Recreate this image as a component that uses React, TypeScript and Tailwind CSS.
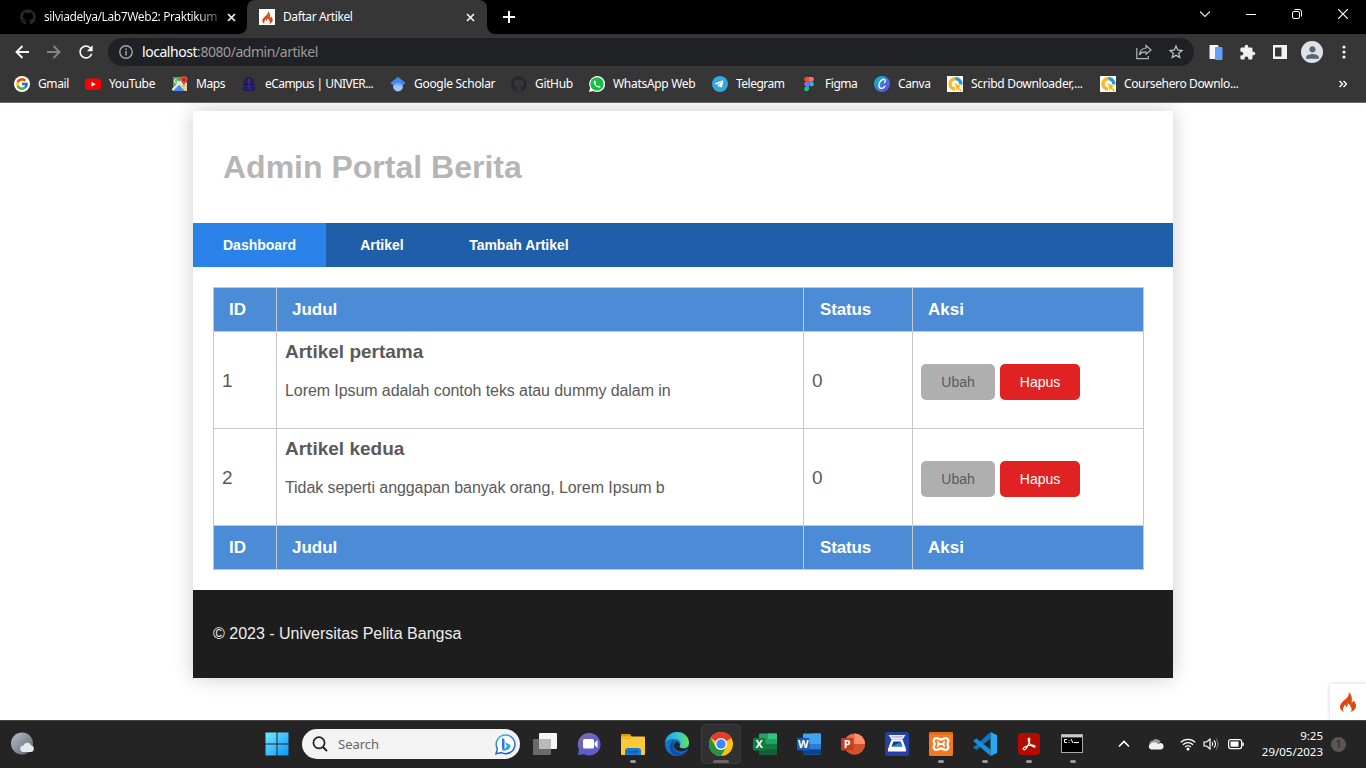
import type { ReactNode } from "react";
import { FcGoogle } from "react-icons/fc";
import { FaGithub, FaTelegramPlane } from "react-icons/fa";
import { MdRefresh, MdOutlineStarBorder, MdExtension, MdPerson } from "react-icons/md";

const S = ({ s = 16, vb = "0 0 16 16", children }: { s?: number; vb?: string; children: ReactNode }) => (
  <svg width={s} height={s} viewBox={vb} fill="none" className="block shrink-0">
    {children}
  </svg>
);

const CloseX = () => (
  <S s={9} vb="0 0 9 9">
    <path d="M1 1l7 7M8 1L1 8" stroke="#f2f2f2" strokeWidth="1.7" />
  </S>
);

const Flame = ({ s }: { s: number }) => (
  <S s={s} vb="0 0 20 20">
    <path
      d="M10.700 0c.7 3.200-.6 4.900-3.300 7.300C4.500 9.900 2 11.900 2 15c0 2.400 1.600 4.200 4 5-1.300-1.200-1.500-2.600-.8-3.900.6-1.200 1.500-2 1.300-3.400 1.200.5 1.700 1.500 1.500 2.600 1.500-1 2.200-2.300 1.700-4 2 .9 2.500 2.500 3.200 4 1.400 2.200.9 3.600-.9 4.700 3.600-.7 6-3 6-6.200 0-2.600-1.500-4-2.500-5.200-.4 1.200-.9 1.800-1.900 2.200C14.300 6.900 14 2.400 10.700 0z"
      fill="#dd4814"
    />
  </S>
);

const GithubDim = () => <FaGithub size={16} color="#24292f" className="shrink-0" />;

const MapsIcon = () => (
  <S>
    <path d="M1 1h11v14H1z" fill="#4caf50" />
    <path d="M1 14L12 3l3 4v8H1z" fill="#dfe3e8" />
    <path d="M1 15l6-6 6 6z" fill="#4a8cf5" />
    <path d="M0 14L10 4" stroke="#fff" strokeWidth="1.5" />
    <path d="M7 9l6 6h2V9z" fill="#f5c32c" opacity=".55" />
    <path d="M4.500 3.200a2 2 0 102 2h-2" stroke="#fff" strokeWidth="1" />
    <path d="M12 0a3.600 3.600 0 00-3.600 3.600C8.400 6 11.400 7 12 10.500c.6-3.500 3.600-4.500 3.600-6.900A3.600 3.600 0 0012 0z" fill="#e94335" />
    <circle cx="12" cy="3.700" r="1.300" fill="#8c1e16" />
  </S>
);

const CampusIcon = () => (
  <S>
    <path d="M3 6a5 5 0 0110 0l1 5-1 4H3l-1-4z" fill="#1c1a5e" />
    <path d="M2 10.500h12M4 13h8M5 6h6" stroke="#2f2a78" />
    <path d="M8 2l1.500 2L8 6.500 6.500 4z" fill="#8b2233" />
    <path d="M8 6v7" stroke="#2f2b78" strokeWidth="2" />
  </S>
);

const ScholarIcon = () => (
  <S>
    <circle cx="8" cy="10.600" r="4.900" fill="#a0c3ff" />
    <path d="M8 .8L15.700 7 12.500 9.600a5 5 0 00-9 0L.3 7z" fill="#4285f4" />
    <path d="M3.500 9.600a5 5 0 019 0z" fill="#76a7fa" />
  </S>
);

const FigmaIcon = () => (
  <S>
    <path d="M5.500 1H8v4.700H5.500a2.350 2.350 0 010-4.700z" fill="#f24e1e" />
    <path d="M8 1h2.600a2.350 2.350 0 010 4.700H8z" fill="#ff7262" />
    <path d="M5.500 5.700H8v4.700H5.500a2.350 2.350 0 010-4.700z" fill="#a259ff" />
    <circle cx="10.500" cy="8.050" r="2.350" fill="#1abcfe" />
    <path d="M5.500 10.400H8v2.300a2.400 2.400 0 11-2.500-2.300z" fill="#0acf83" />
  </S>
);

const CanvaIcon = () => (
  <S>
    <defs>
      <linearGradient id="canva" x1="0" y1="0" x2="1" y2="1">
        <stop offset="0" stopColor="#00c4cc" />
        <stop offset=".55" stopColor="#3f7be0" />
        <stop offset="1" stopColor="#7d2ae8" />
      </linearGradient>
    </defs>
    <circle cx="8" cy="8" r="8" fill="url(#canva)" />
    <path d="M10.600 6.200c1.200-1.200.8-3-.8-3-2.600 0-5 3.500-4.900 6.300.1 3.300 3.700 4 6 .9" stroke="#fff" strokeWidth="1.400" strokeLinecap="round" />
  </S>
);

const DownloaderIcon = () => (
  <S>
    <path d="M0 0h16v16H0z" fill="#fff" />
    <path d="M9 2.800A5 5 0 003 8a5 5 0 005 5" stroke="#fbb71b" strokeWidth="3.400" />
    <path d="M8.500 2.500A5.500 5.500 0 0113.800 8.500" stroke="#1e9be0" strokeWidth="3.400" />
    <path d="M7.500 6.500l7.500 4-3 1 3.500 3-1.500 1.500-3.200-3-1.300 2.500z" fill="#fbb71b" stroke="#fff" strokeWidth=".5" />
  </S>
);

const bookmarks: { label: string; box: string; text: string; icon: ReactNode }[] = [
  { label: "Gmail", box: "w-[71px]", text: "tracking-[-0.4px]", icon: <span className="flex size-4 items-center justify-center rounded-full bg-white"><FcGoogle size={14} /></span> },
  { label: "YouTube", box: "w-[87px]", text: "tracking-[-0.35px]", icon: <S><rect y="2.500" width="16" height="11.500" rx="3" fill="#f00" /><path d="M6.500 5.800v5l4.200-2.500z" fill="#fff" /></S> },
  { label: "Maps", box: "w-[69px]", text: "tracking-[-0.45px]", icon: <MapsIcon /> },
  { label: "eCampus | UNIVER...", box: "w-[149px]", text: "tracking-[-0.55px]", icon: <CampusIcon /> },
  { label: "Google Scholar", box: "w-[121px]", text: "tracking-[-0.3px]", icon: <ScholarIcon /> },
  { label: "GitHub", box: "w-[78px]", text: "tracking-[-0.35px]", icon: <GithubDim /> },
  { label: "WhatsApp Web", box: "w-[123px]", text: "tracking-[-0.3px]", icon: <S><path d="M0 16l1.200-4.200A8 8 0 118 16a8 8 0 01-3.800-1z" fill="#fff" /><circle cx="8" cy="8" r="6.700" fill="#12c143" /><path d="M5.500 4.300c-1.700 1.200-.4 4 1.200 5.600 1.700 1.600 4.200 2.500 5 .8l-1.800-1.300-1 .8c-1-.3-1.900-1.300-2.300-2.200l.6-1-.8-1.900z" fill="#fff" /></S> },
  { label: "Telegram", box: "w-[89px]", text: "tracking-[-0.5px]", icon: <span className="flex size-4 items-center justify-center rounded-full bg-[#34a6e0] pr-0.5"><FaTelegramPlane size={10} color="#fff" /></span> },
  { label: "Figma", box: "w-[73px]", text: "tracking-[-0.45px]", icon: <FigmaIcon /> },
  { label: "Canva", box: "w-[73px]", text: "tracking-[-0.4px]", icon: <CanvaIcon /> },
  { label: "Scribd Downloader,...", box: "w-[153px]", text: "tracking-[-0.3px]", icon: <DownloaderIcon /> },
  { label: "Coursehero Downlo...", box: "w-[153px]", text: "tracking-[-0.36px]", icon: <DownloaderIcon /> },
];

function TabStrip() {
  return (
    <div className="flex h-[34px] bg-black text-xs text-white">
      <div className="flex w-[247px] items-center pl-5">
        <GithubDim />
        <span className="ml-2 w-[174px] whitespace-nowrap bg-linear-to-r from-white from-88% to-neutral-600 bg-clip-text tracking-[-0.4px] text-transparent">
          silviadelya/Lab7Web2: Praktikum
        </span>
        <span className="ml-[9px]"><CloseX /></span>
      </div>
      <div className="relative flex w-60 items-center rounded-t-lg bg-[#363636] pl-3">
        <svg width="8" height="8" className="absolute -left-2 bottom-0"><path d="M8 0v8H0a8 8 0 008-8z" fill="#363636" /></svg>
        <svg width="8" height="8" className="absolute -right-2 bottom-0"><path d="M0 0v8h8a8 8 0 01-8-8z" fill="#363636" /></svg>
        <span className="flex size-4 items-center justify-center bg-white"><Flame s={13} /></span>
        <span className="ml-2 flex-1 tracking-[-0.4px]">Daftar Artikel</span>
        <span className="mr-3"><CloseX /></span>
      </div>
      <div className="flex flex-1 items-center pl-4">
        <S s={12} vb="0 0 12 12"><path d="M6 0v12M0 6h12" stroke="#fff" strokeWidth="2" /></S>
      </div>
      <div className="flex w-[184px] -translate-y-[3px] items-center">
        <span className="flex w-[46px] justify-center"><S s={10} vb="0 0 10 10"><path d="M0 2.500l5 5 5-5" stroke="#eee" strokeWidth="1.100" /></S></span>
        <span className="flex w-[46px] justify-center"><S s={10} vb="0 0 10 10"><path d="M0 5.500h10" stroke="#fff" /></S></span>
        <span className="flex w-[46px] justify-center"><S s={10} vb="0 0 10 10"><rect x=".5" y="2.500" width="7" height="7" rx="1.500" stroke="#fff" /><path d="M2.500.5H7a2.500 2.500 0 012.500 2.500v4.500" stroke="#fff" /></S></span>
        <span className="flex w-[46px] justify-center"><S s={10} vb="0 0 10 10"><path d="M0 0l10 10M10 0L0 10" stroke="#fff" strokeWidth="1.200" /></S></span>
      </div>
    </div>
  );
}

function Toolbar() {
  return (
    <div className="flex h-9 items-center bg-[#363636]">
      <div className="flex w-[108px] items-center pl-[15px]">
        <S s={14} vb="0 0 14 14"><path d="M14 7H1.500M7.500 1L1.500 7l6 6" stroke="#f5f5f5" strokeWidth="1.900" /></S>
        <span className="ml-[18px]"><S s={14} vb="0 0 14 14"><path d="M0 7h12.500M6.500 1l6 6-6 6" stroke="#858585" strokeWidth="1.900" /></S></span>
        <MdRefresh size={20} color="#f5f5f5" className="ml-[15px]" />
      </div>
      <div className="flex h-7 w-[1086px] items-center rounded-full bg-[#202124] pl-[11px] pr-[9px]">
        <S s={14} vb="0 0 14 14"><circle cx="7" cy="7" r="6.200" stroke="#a5a7aa" strokeWidth="1.400" /><path d="M7 6v4.500M7 3.500V5" stroke="#a5a7aa" strokeWidth="1.500" /></S>
        <span className="ml-[9px] flex-1 text-sm tracking-[-0.45px] text-[#9a9b9d]"><span className="text-white">localhost</span>:8080/admin/artikel</span>
        <S s={16}><path d="M.8 4v10.600h11.500V12" stroke="#b5b6b8" strokeWidth="1.200" /><path d="M10 1.500L15 6l-5 4.300V8C7 7.800 5 8.500 3.300 10.800 4 6.500 6.500 4.300 10 4z" stroke="#b5b6b8" strokeWidth="1.200" /></S>
        <MdOutlineStarBorder size={18} color="#c5c6c8" className="ml-[15px]" />
      </div>
      <div className="flex flex-1 items-center">
        <span className="ml-[15px]"><S s={15} vb="0 0 15 15"><rect x="0.500" y="0" width="9" height="14" rx="1" fill="#f4f6f8" /><rect x="6" y="2" width="7.500" height="13" rx="1" fill="#62a1fb" /></S></span>
        <MdExtension size={17} color="#f1f1f1" className="ml-[15px]" />
        <span className="ml-[17px]"><S s={14} vb="0 0 14 14"><path d="M0 0h14v14H0zM2 2.500v9h6.500v-9z" fill="#f4f4f4" fillRule="evenodd" /></S></span>
        <span className="ml-[14px] flex size-[22px] items-center justify-center rounded-full bg-[#dee1e6]"><MdPerson size={19} color="#586475" /></span>
        <svg width="4" height="14" className="ml-[19px] shrink-0" fill="#f5f5f5"><circle cx="2" cy="2" r="1.600" /><circle cx="2" cy="7" r="1.600" /><circle cx="2" cy="12" r="1.600" /></svg>
      </div>
    </div>
  );
}

function Bookmarks() {
  return (
    <div className="flex h-[33px] items-center border-b border-[#6a6667] bg-[#363636] pb-[4px] pl-3.5 text-xs text-white">
      {bookmarks.map((b) => (
        <div key={b.label} className={`flex shrink-0 items-center whitespace-nowrap ${b.box}`}>
          {b.icon}
          <span className={`ml-2 ${b.text}`}>{b.label}</span>
        </div>
      ))}
      <span className="ml-[86px]"><S s={8} vb="0 0 8 8"><path d="M.5 1l3 3-3 3M4.500 1l3 3-3 3" stroke="#fff" strokeWidth="1.400" /></S></span>
    </div>
  );
}

const articles = [
  { id: 1, title: "Artikel pertama", body: "Lorem Ipsum adalah contoh teks atau dummy dalam in" },
  { id: 2, title: "Artikel kedua", body: "Tidak seperti anggapan banyak orang, Lorem Ipsum b" },
];
const grid = "grid grid-cols-[63px_527px_109px_232px] border-[#c8c8c8] *:border-l *:border-[#c8c8c8] *:last:border-r";

function HeadRow() {
  return (
    <div className={`${grid} h-11 border-t bg-[#4c8bd5] text-[17px] font-bold text-white *:flex *:items-center *:pl-[15px]`}>
      <div>ID</div>
      <div>Judul</div>
      <div><span className="pl-px tracking-[-0.15px]">Status</span></div>
      <div>Aksi</div>
    </div>
  );
}

function Page() {
  return (
    <div className="relative h-[617px] overflow-hidden bg-white pt-2 font-['Liberation_Sans',Arial,sans-serif] text-[#5a5a5a]">
      <div className="mx-auto w-[980px] bg-white shadow-[0_0_20px_rgba(0,0,0,0.2)]">
        <header className="flex h-28 items-center pl-[30px]">
          <h1 className="text-[32px] font-bold text-[#b5b5b5]">Admin Portal Berita</h1>
        </header>
        <nav className="flex h-11 items-stretch gap-1 bg-[#1f5faa] text-sm font-bold text-white *:flex *:items-center *:px-[30px]">
          <a className="bg-[#2b83ea]">Dashboard</a>
          <a className="w-[105px]">Artikel</a>
          <a>Tambah Artikel</a>
        </nav>
        <main className="px-5 pt-5 pb-5">
          <div className="w-[931px] border-b border-[#c8c8c8]">
            <HeadRow />
            {articles.map((a) => (
              <div key={a.id} className={`${grid} h-[97px] border-t`}>
                <div className="flex items-center pt-0.5 pl-2 text-[19px]">{a.id}</div>
                <div className="pt-[9px] pl-2">
                  <h2 className="text-[19px] leading-[22px] font-bold">{a.title}</h2>
                  <p className="pt-[19px] text-base leading-[18px] tracking-[-0.08px]">{a.body}</p>
                </div>
                <div className="flex items-center pt-0.5 pl-2 text-[19px]">0</div>
                <div className="flex items-center gap-[5px] pt-1 pl-2 text-sm">
                  <button className="h-9 w-[74px] rounded-[5px] bg-[#afafaf] text-[#5a5a5a]">Ubah</button>
                  <button className="h-9 w-20 rounded-[5px] bg-[#e02222] text-white">Hapus</button>
                </div>
              </div>
            ))}
            <HeadRow />
          </div>
        </main>
        <footer className="flex h-22 items-center bg-[#1d1d1d] pl-5 text-base text-[#eeeeee]">
          © 2023 - Universitas Pelita Bangsa
        </footer>
      </div>
      <div className="absolute right-0 bottom-0 flex size-9 items-center justify-center bg-white shadow-[0_0_4px_rgba(0,0,0,0.2)]">
        <Flame s={20} />
      </div>
    </div>
  );
}

const Office = ({ c, letter, round }: { c: string[]; letter: string; round?: boolean }) => (
  <S s={24} vb="0 0 24 24">
    {round ? (
      <>
        <circle cx="13.500" cy="12" r="10.500" fill={c[0]} />
        <path d="M13.500 1.500A10.500 10.500 0 0124 12H13.500z" fill={c[1]} />
        <path d="M3 12h21a10.500 10.500 0 01-21 0z" fill={c[2]} />
      </>
    ) : (
      <>
        <rect x="6" y="1.500" width="18" height="21" rx="1" fill={c[0]} />
        <path d="M15 1.500h8a1 1 0 011 1V7h-9z" fill={c[1]} />
        <path d="M6 12h18v5.500H6z" fill={c[2]} />
        <path d="M6 17.300h18v4.200a1 1 0 01-1 1H6z" fill={c[3]} />
      </>
    )}
    <rect y="6" width="12.500" height="12.500" rx="1" fill={c[4]} />
    <text x="6.200" y="16.200" textAnchor="middle" fontFamily="Open Sans, sans-serif" fontWeight="700" fontSize="11" fill="#fff">{letter}</text>
  </S>
);

const apps: { name: string; run?: boolean; active?: boolean; icon: ReactNode }[] = [
  { name: "tasks", icon: <S s={24} vb="0 0 24 24"><rect x="6" y="1" width="18" height="16" rx="1" fill="#f4f4f4" /><rect y="7" width="18" height="16" rx="1" fill="#6a6a6a" /><path d="M6 7h12v10H6z" fill="#b9b9b9" /></S> },
  { name: "chat", icon: <S s={24} vb="0 0 24 24"><defs><linearGradient id="cht" x1="0" y1="0" x2=".6" y2="1"><stop stopColor="#8c6aa6" /><stop offset=".6" stopColor="#5f60cc" /><stop offset="1" stopColor="#5b5bd0" /></linearGradient></defs><path d="M12 1a11.300 11.300 0 11-5 21.300L1 23l1-5.500A11.300 11.300 0 0112 1z" fill="url(#cht)" /><rect x="6" y="7" width="11" height="9.500" rx="1.500" fill="#fff" /><path d="M17.500 11l3-3v8l-3-3z" fill="#fff" /></S> },
  { name: "files", run: true, icon: <S s={24} vb="0 0 24 24"><path d="M0 3a1 1 0 011-1h8l2 3v3H0z" fill="#dd9b0a" /><rect y="4.500" width="24" height="18.500" rx="1" fill="#fcc938" /><path d="M0 6.500h9l2-2" stroke="#e9ad1b" /><path d="M4 23v-4a3 3 0 013-3h10a3 3 0 013 3v4z" fill="#1379d2" /><path d="M7 19h10v1.500H7z" fill="#0b5698" /></S> },
  { name: "edge", icon: <S s={24} vb="0 0 24 24"><defs><linearGradient id="e1" x1="0" y1=".4" x2="1" y2=".4"><stop stopColor="#259fdc" /><stop offset=".5" stopColor="#35c2dc" /><stop offset="1" stopColor="#6be04a" /></linearGradient></defs><circle cx="12" cy="12" r="12" fill="#1174cd" /><path d="M0 11C.5 4 6 0 12 0c7 0 12 5 12 10.500 0 4-3 5.700-6 5.700-3.500 0-4-1.700-3-2.700 2-3-1-6.500-5.500-6.500C5 7 1 8.500 0 11z" fill="url(#e1)" /><path d="M8.500 12c-1.500 5 3 10.500 10 8.500l3.300-2.200C19 24 9 26 5.500 19 3.500 14 6 9 10 7.500 8.500 9 8.800 10.800 8.500 12z" fill="#0d4f9c" /><path d="M12 9.500c-3 .5-4.500 5-1 8.300 3 2.400 7 2.400 10.500-.3l2.500.5L24 15c-3 2-8 2-9.300 0-.7-1 .3-1.500.2-3z" fill="#242424" /></S> },
  { name: "chrome", run: true, active: true, icon: <S s={24} vb="0 0 24 24"><circle cx="12" cy="12" r="12" fill="#fbc116" /><path d="M12 12L1.600 6A12 12 0 0122.400 6z" fill="#e33b2e" /><path d="M12 6h10.400A12 12 0 0012 0z" fill="#e33b2e" /><path d="M1.600 6l5.200 9L12 18l-1 6A12 12 0 011.600 6z" fill="#229342" /><path d="M12 17l5.200-2L12 24h-1.500z" fill="#229342" /><circle cx="12" cy="12" r="6" fill="#fff" /><circle cx="12" cy="12" r="4.700" fill="#4285f4" /></S> },
  { name: "excel", icon: <Office letter="X" c={["#21a366", "#33c481", "#107c41", "#185c37", "#107c41"]} /> },
  { name: "word", icon: <Office letter="W" c={["#41a5ee", "#41a5ee", "#2b7cd3", "#103f91", "#185abd"]} /> },
  { name: "ppt", icon: <Office round letter="P" c={["#ed6c47", "#ff8f6b", "#d35230", "", "#c43e1c"]} /> },
  { name: "scan", icon: <S s={24} vb="0 0 24 24"><rect width="24" height="24" rx="2.500" fill="#2540a8" /><path d="M3.500 3h17l-3 4.500h-11z" fill="#f2f4fa" /><path d="M6 4h12l-1 2H7z" fill="#b9c4e6" /><path d="M6.500 7.500h11L21 17v2.500H3V17z" fill="#fff" /><path d="M8.500 9.500h7l2 5H6.500z" fill="#1c3794" /><path d="M6.500 14.500l8.500-4 2 4z" fill="#1f91cf" /></S> },
  { name: "xampp", run: true, icon: <S s={24} vb="0 0 24 24"><rect width="24" height="24" rx="1.500" fill="#f27a23" /><path d="M.5.500h23v1.500H.5z" fill="#c96a2a" /><path d="M7.500 6.200C5 6.200 4 8.500 5 10.200c.8 1.200.8 2.400 0 3.600-1 1.700 0 4 2.500 4 2.200 0 2.800-1.300 4.500-1.300s2.300 1.300 4.500 1.300c2.500 0 3.500-2.300 2.500-4-.8-1.200-.8-2.400 0-3.600 1-1.700 0-4-2.500-4-2.200 0-2.800 1.300-4.500 1.300S9.700 6.200 7.500 6.200z" stroke="#fff" strokeWidth="2.300" /><path d="M8.700 9.800q1.800 2.200 0 4.400M15.300 9.800q-1.800 2.200 0 4.400M9.500 12h5" stroke="#fff" strokeWidth="1.800" strokeLinecap="round" /></S> },
  { name: "code", run: true, icon: <S s={24} vb="0 0 24 24"><path d="M17.500 0L24 3v18l-6.500 3z" fill="#2aa7f2" /><path d="M17.500 0v6.500L3.500 18 0 15.700z" fill="#0a78c6" /><path d="M17.500 24v-6.500L3.500 6.500 0 8.800z" fill="#1a8ddd" /></S> },
  { name: "pdf", run: true, icon: <span className="mb-px flex size-[22px] items-center justify-center rounded bg-[#b30b00]"><S s={16}><path d="M2.500 13.500c-1.500-1.200 2-3.300 5.500-4 3.500-.8 6.500-.3 6 1.200-.6 1.500-5-1.700-6.200-4.700C7 3.800 7 2 8 2s1 2.200 0 5-3.500 8-5.500 6.500z" stroke="#fff" strokeWidth="1.200" /></S></span> },
  { name: "cmd", run: true, icon: <svg width="22" height="19" fill="none" className="mr-0.5 mb-px"><path d="M0 0h22v19H0z" fill="#a9a9a9" /><path d="M1 1h20v2H1z" fill="#c8ccd8" /><path d="M1 3.500h20V18H1z" fill="#000" /><path d="M6 5.500H3.500v3H6M8 6v.8M8 8v.8M10 5l2 4M13 8.500h5" stroke="#fff" strokeWidth="1" /></svg> },
];

function Taskbar() {
  return (
    <div className="flex h-12 items-center border-t border-[#454545] bg-[#242424] pb-px text-white">
      <div className="w-[254px] pl-[11px]">
        <S s={24} vb="0 0 24 24"><defs><linearGradient id="moon" x1="0" y1="0" x2="1" y2="1"><stop stopColor="#b8c1cb" /><stop offset="1" stopColor="#59626d" /></linearGradient></defs><circle cx="11" cy="11.500" r="11" fill="url(#moon)" /><path d="M12.500 20a3.200 3.200 0 010-6.400 4 4 0 017.500-.3 3.400 3.400 0 010 6.700z" fill="#e6e9ee" /></S>
      </div>
      <div className="flex w-11 justify-center pl-px">
        <S s={24} vb="0 0 24 24"><defs><linearGradient id="win" x1="0" y1="0" x2="24" y2="24" gradientUnits="userSpaceOnUse"><stop stopColor="#74ecff" /><stop offset="1" stopColor="#0a93fb" /></linearGradient></defs><path d="M.5.500h11v11H.5zM12.500.5h11v11h-11zM.5 12.500h11v11H.5zM12.500 12.500h11v11h-11z" fill="url(#win)" /></S>
      </div>
      <div className="ml-1 flex h-[30px] w-[218px] items-center rounded-full bg-[#f3f3f3] pr-1 pl-[10px]">
        <S s={16}><circle cx="7" cy="6.800" r="5.600" stroke="#1e1e1e" strokeWidth="1.700" /><path d="M11 11l4 4.200" stroke="#1e1e1e" strokeWidth="1.900" /></S>
        <span className="ml-2.5 flex-1 pt-px text-[13px] text-[#656565]">Search</span>
        <S s={21} vb="0 0 21 21"><defs><linearGradient id="bing" x1="0" y1="0" x2=".4" y2="1"><stop stopColor="#31b9f2" /><stop offset="1" stopColor="#2055ca" /></linearGradient></defs><path d="M11 1a9.300 9.300 0 11-4.500 17.600L1 19.800l1.400-5A9.300 9.300 0 0111 1z" stroke="url(#bing)" strokeWidth="1.500" fill="#fff" /><path d="M7 4l2.500 1.200v9L7 16z" fill="#2578de" /><path d="M10 8l5 2.700c1.500 2-.5 4-2.500 5L8.500 17 7 16l4-2.500 1-1z" fill="#2ca0e8" /></S>
      </div>
      <div className="ml-[3px] flex">
        {apps.map((a) => (
          <div key={a.name} className="flex w-11 justify-center">
            <div className={`relative flex size-10 items-center justify-center rounded ${a.active ? "border border-[#3a3a3a] bg-[#303030]" : ""}`}>
              {a.icon}
              {a.run && <i className={`absolute h-[3px] rounded-full ${a.active ? "bottom-0 w-4 bg-[#6a6663]" : "bottom-px w-1.5 bg-[#999]"}`} />}
            </div>
          </div>
        ))}
      </div>
      <div className="flex flex-1 items-center">
        <span className="ml-[23px]"><S s={12} vb="0 0 12 12"><path d="M1 8.500l5-5 5 5" stroke="#fff" strokeWidth="1.600" /></S></span>
        <span className="ml-[18px]"><S s={16}><path d="M2 10a3.500 3.500 0 013-5.500 4.800 4.800 0 017.500 1L9 9z" fill="#999" /><path d="M3 13.500a3 3 0 01-.3-5.700A5 5 0 0110 8l2-1a3.300 3.300 0 011 6.500z" fill="#f0f0f0" /></S></span>
        <span className="ml-[16px]"><S><path d="M.8 6.400a10.200 10.200 0 0114.400 0M3 8.700a7 7 0 0110 0M5.200 11a4 4 0 015.600 0" stroke="#fff" strokeWidth="1.300" /><circle cx="8" cy="13" r="1.500" fill="#fff" /></S></span>
        <span className="ml-[7px]"><S><path d="M1 6v4h2.500L7 13V3L3.500 6z" stroke="#fff" strokeWidth="1.200" /><path d="M9 6q1.500 2 0 4M11 4.300q3 3.700 0 7.400" stroke="#fff" strokeWidth="1.100" /><path d="M13 2.500q4 5.500 0 11" stroke="#777" strokeWidth="1.100" /></S></span>
        <span className="ml-[9px]"><S><rect x=".6" y="3.600" width="13" height="9" rx="2" stroke="#fff" strokeWidth="1.200" /><rect x="2.500" y="5.500" width="8" height="5.200" fill="#fff" /><path d="M15 6.500v3.500" stroke="#fff" strokeWidth="1.500" /></S></span>
        <div className="flex-1 text-right text-[11.5px] leading-4">
          <div>9:25</div>
          <div>29/05/2023</div>
        </div>
        <span className="mr-5 ml-2 flex size-[15px] items-center justify-center rounded-full bg-[#5a5653] text-[10px] leading-none text-[#222]">1</span>
      </div>
    </div>
  );
}

export default function App() {
  return (
    <div className="h-[768px] w-[1366px] overflow-hidden font-['Noto_Sans','Open_Sans',sans-serif]">
      <TabStrip />
      <Toolbar />
      <Bookmarks />
      <Page />
      <Taskbar />
    </div>
  );
}
